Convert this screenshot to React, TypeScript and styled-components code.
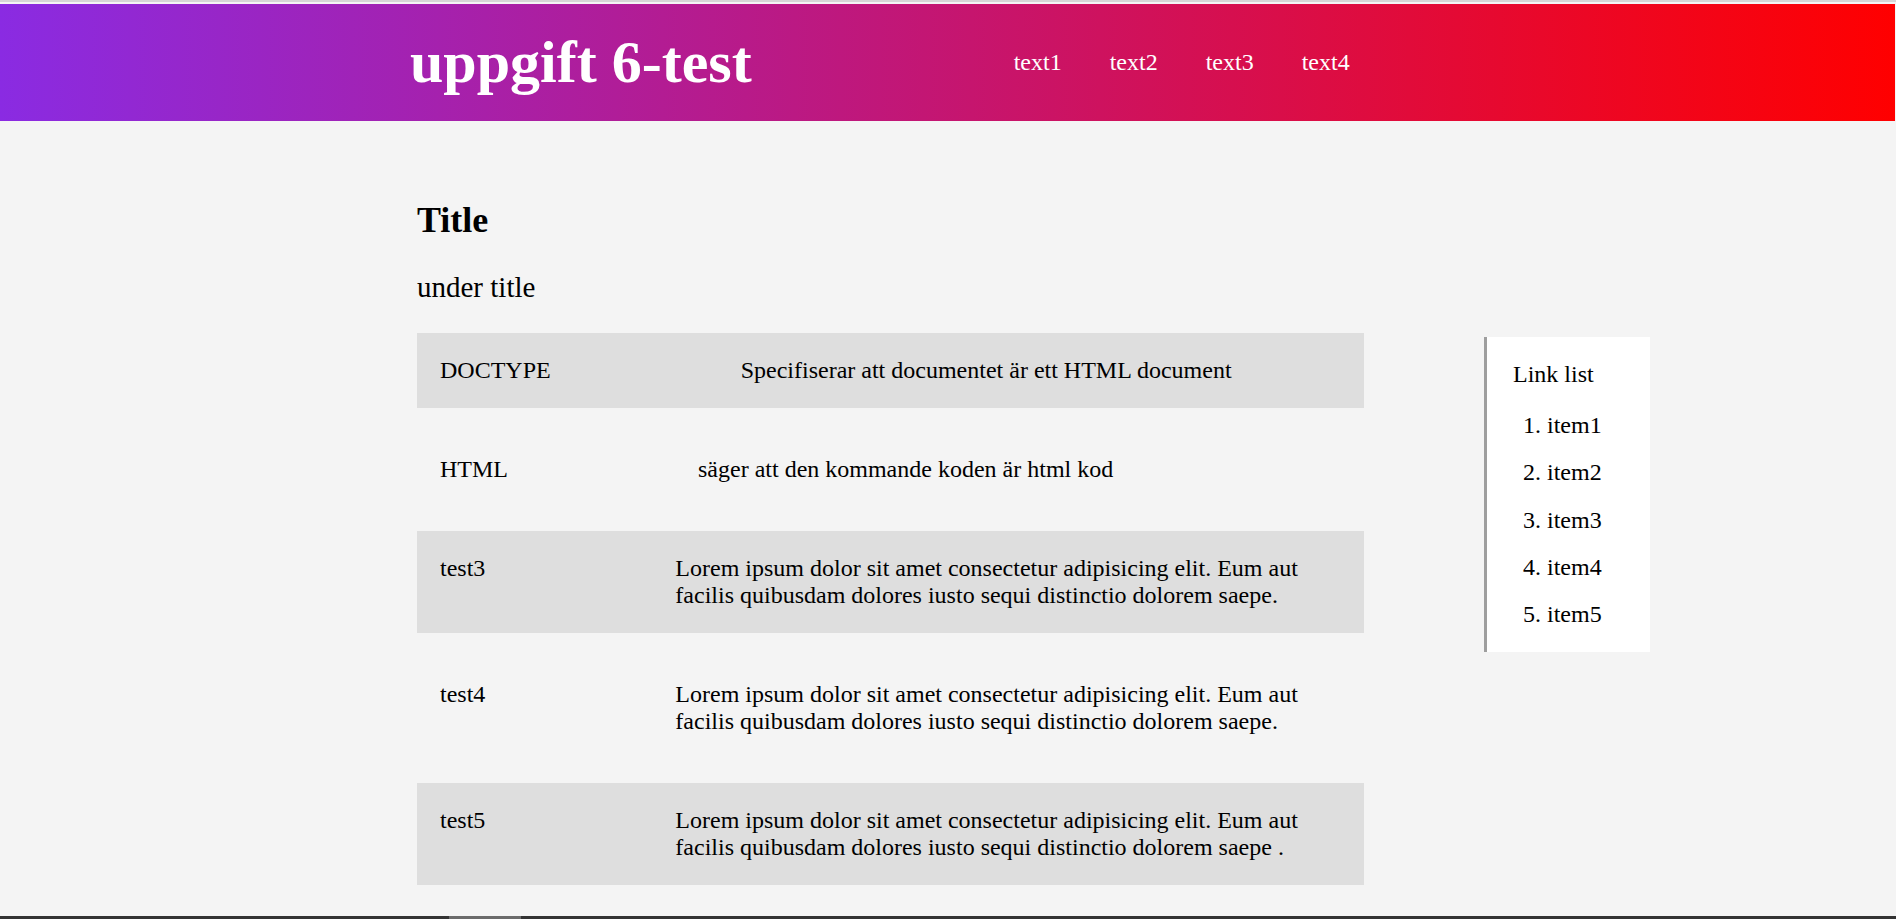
import React from "react";
import styled, { createGlobalStyle } from "styled-components";

const GlobalStyle = createGlobalStyle`
  * { box-sizing: border-box; }
  html, body { margin: 0; padding: 0; }
  body {
    background: #f4f4f4;
    color: #000;
    font-family: "Liberation Serif", "Times New Roman", serif;
    border-top: 2px solid #d6d6d6;
    padding-top: 2px;
  }
`;

const Header = styled.header`
  display: flex;
  align-items: center;
  height: 117px;
  margin-right: 1px;
  padding-left: 410px;
  background: linear-gradient(to right, #8a2be2, #ff0000);
  color: #fff;
`;

const SiteTitle = styled.h1`
  margin: 0;
  font-size: 60px;
  line-height: 69px;
  font-weight: 700;
  white-space: nowrap;
`;

const Nav = styled.nav`
  display: flex;
  gap: 48px;
  margin-left: 262px;
`;

const NavLink = styled.a`
  color: #fff;
  text-decoration: none;
  font-size: 24px;
  line-height: 27px;
`;

const Main = styled.main`
  padding: 79px 0 40px 417px;
`;

const PageTitle = styled.h2`
  margin: 0 0 31px;
  font-size: 36px;
  line-height: 40px;
  font-weight: 700;
`;

const SubTitle = styled.p`
  margin: 0 0 30px;
  font-size: 29px;
  line-height: 32px;
`;

const ContentRow = styled.div`
  display: flex;
  align-items: flex-start;
  gap: 120px;
`;

const Table = styled.div`
  display: flex;
  flex-direction: column;
  width: 947px;
`;

const Row = styled.div<{ $shaded: boolean }>`
  display: flex;
  align-items: flex-start;
  padding: ${(p) => (p.$shaded ? "24px" : "48px")} 24px ${(p) => (p.$shaded ? "24px" : "48px")} 23px;
  background: ${(p) => (p.$shaded ? "#dedede" : "transparent")};
  font-size: 24px;
  line-height: 27px;
`;

const Label = styled.span`
  flex: none;
  margin-right: 190px;
`;

const Desc = styled.span`
  min-width: 0;
`;

const Aside = styled.aside`
  flex: none;
  width: 166px;
  margin-top: 4px;
  padding: 24px 0 24px 26px;
  background: #fff;
  border-left: 3px solid #9e9e9e;
  font-size: 24px;
  line-height: 27px;
`;

const AsideTitle = styled.p`
  margin: 0 0 24px;
`;

const LinkList = styled.ol`
  margin: 0;
  padding-left: 34px;
`;

const LinkItem = styled.li`
  & + & {
    margin-top: 20.3px;
  }
`;

const BottomBar = styled.div`
  position: fixed;
  left: 0;
  right: 0;
  bottom: 0;
  height: 3px;
  background: #333;
`;

const BottomThumb = styled.div`
  position: absolute;
  left: 449px;
  top: 0;
  width: 72px;
  height: 100%;
  background: #6b6b6b;
`;

const lorem =
  "Lorem ipsum dolor sit amet consectetur adipisicing elit. Eum aut facilis quibusdam dolores iusto sequi distinctio dolorem saepe.";

const rows = [
  { label: "DOCTYPE", desc: "Specifiserar att documentet är ett HTML document" },
  { label: "HTML", desc: "säger att den kommande koden är html kod" },
  { label: "test3", desc: lorem },
  { label: "test4", desc: lorem },
  {
    label: "test5",
    desc: "Lorem ipsum dolor sit amet consectetur adipisicing elit. Eum aut facilis quibusdam dolores iusto sequi distinctio dolorem saepe .",
  },
];

const navItems = ["text1", "text2", "text3", "text4"];
const links = ["item1", "item2", "item3", "item4", "item5"];

export default function App() {
  return (
    <>
      <GlobalStyle />
      <Header>
        <SiteTitle>uppgift 6-test</SiteTitle>
        <Nav>
          {navItems.map((n) => (
            <NavLink key={n} href="#">
              {n}
            </NavLink>
          ))}
        </Nav>
      </Header>
      <Main>
        <PageTitle>Title</PageTitle>
        <SubTitle>under title</SubTitle>
        <ContentRow>
          <Table>
            {rows.map((r, i) => (
              <Row key={r.label} $shaded={i % 2 === 0}>
                <Label>{r.label}</Label>
                <Desc>{r.desc}</Desc>
              </Row>
            ))}
          </Table>
          <Aside>
            <AsideTitle>Link list</AsideTitle>
            <LinkList>
              {links.map((l) => (
                <LinkItem key={l}>{l}</LinkItem>
              ))}
            </LinkList>
          </Aside>
        </ContentRow>
      </Main>
      <BottomBar>
        <BottomThumb />
      </BottomBar>
    </>
  );
}
